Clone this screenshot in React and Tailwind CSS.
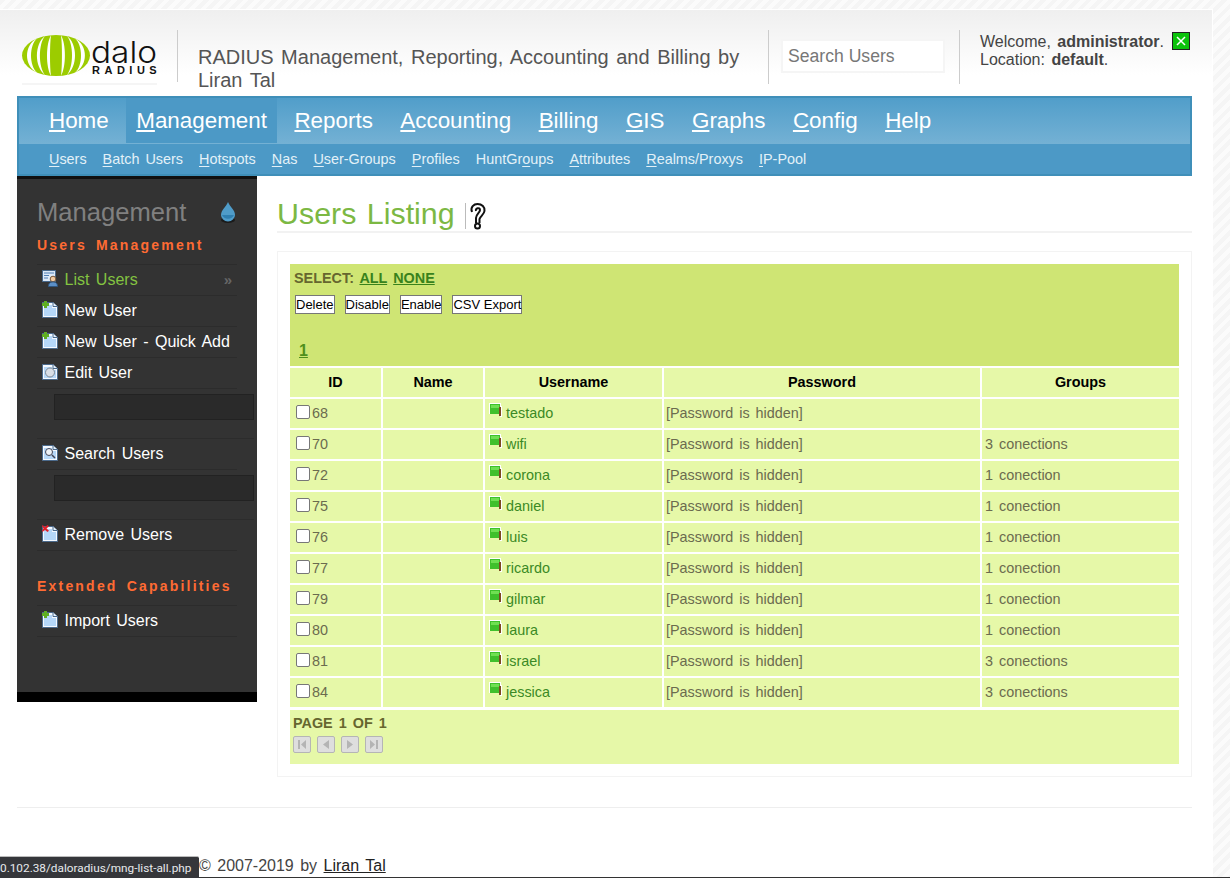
const mainNav = [
  ['H', 'ome'],
  ['M', 'anagement'],
  ['R', 'eports'],
  ['A', 'ccounting'],
  ['B', 'illing'],
  ['G', 'IS'],
  ['G', 'raphs'],
  ['C', 'onfig'],
  ['H', 'elp'],
];

const subNav = [
  ['U', 'sers'],
  ['B', 'atch Users'],
  ['H', 'otspots'],
  ['N', 'as'],
  ['U', 'ser-Groups'],
  ['P', 'rofiles'],
  ['', 'HuntGroups'],
  ['A', 'ttributes'],
  ['R', 'ealms/Proxys'],
  ['I', 'P-Pool'],
];

const users = [
  [68, 'testado', ''],
  [70, 'wifi', '3 conections'],
  [72, 'corona', '1 conection'],
  [75, 'daniel', '1 conection'],
  [76, 'luis', '1 conection'],
  [77, 'ricardo', '1 conection'],
  [79, 'gilmar', '1 conection'],
  [80, 'laura', '1 conection'],
  [81, 'israel', '3 conections'],
  [84, 'jessica', '3 conections'],
];

const Logo = () => (
  <div className="w-[135px] h-[50px] border-b-2 border-[#f5f5f5]">
    <svg width="139" height="42" viewBox="0 0 139 42">
      <ellipse cx="34" cy="20.500" rx="34" ry="20.500" fill="#9ccc00" />
      <g fill="#fff">
        <path d="M29 .2C23.700 9 23.700 32 29 40.800 27.700 32 27.700 9 29 .2z" />
        <path d="M23 1.100C12.300 9 12.300 32 23 39.900 16.300 32 16.300 9 23 1.100z" />
        <path d="M15 3.500C1.700 10 1.700 31 15 37.500 7 31 7 10 15 3.500z" />
        <path d="M39 .2C44.300 9 44.300 32 39 40.800 40.300 32 40.300 9 39 .2z" />
        <path d="M45 1.100C55.700 9 55.700 32 45 39.900 51.700 32 51.700 9 45 1.100z" />
        <path d="M53 3.500C66.300 10 66.300 31 53 37.500 61 31 61 10 53 3.500z" />
      </g>
      <text x="69" y="28" fontFamily="Inter, 'Liberation Sans', sans-serif" fontSize="30" fontWeight="300" textLength="66" lengthAdjust="spacingAndGlyphs" fill="#111">dalo</text>
      <text x="70" y="38.500" fontFamily="'Liberation Sans', sans-serif" fontSize="11" fontWeight="700" letterSpacing="4.500" fill="#111">RADIUS</text>
    </svg>
  </div>
);

const PageIcon = ({ badge }) => (
  <svg width="16" height="17" viewBox="0 0 16 17" className="shrink-0">
    <path d="M.5 1.500h10.500l4.500 4v11H.5z" fill="#f4f9ff" stroke="#4b6a8c" />
    <path d="M11 1.500v4h4.500" fill="#e6f1fb" stroke="#4b6a8c" />
    <path d="M2 4h8v3h4v8H2z" fill="#b5d7f8" />
    {badge === 'add' && <path d="M2 0h3v2h2v3H5v2H2V5H0V2h2z" fill="#5fae23" />}
    {badge === 'remove' && <path d="M.5 0L3 2 5.500 0 7 1.200 4.500 3.500 7 5.800 5.500 7 3 5 .5 7 0 5.800 1.500 3.500 0 1.200z" fill="#e0202a" />}
    {badge === 'edit' && <circle cx="8" cy="9.500" r="4.500" fill="#d8dee6" stroke="#7b8794" />}
    {badge === 'search' && <><circle cx="7" cy="8" r="3.500" fill="#eef3f8" stroke="#445" /><path d="M10 11l3 3" stroke="#445" strokeWidth="1.500" /></>}
  </svg>
);

const ListIcon = () => (
  <svg width="17" height="17" viewBox="0 0 17 17" className="shrink-0">
    <path d="M.5.5h13v11H.5z" fill="#dce9f8" stroke="#47688c" />
    <path d="M2 3h10M2 5.500h5M2 8h4" stroke="#4f7fb5" />
    <circle cx="11" cy="9" r="2.800" fill="#f1c9a0" stroke="#7a5a3c" />
    <path d="M6.500 16.500c0-3.500 2-4.500 4.500-4.500s4.500 1 4.500 4.500z" fill="#5b8fc7" stroke="#2f5680" />
  </svg>
);

const Flag = () => (
  <svg width="13" height="14" viewBox="0 0 13 14" className="shrink-0">
    <path d="M0 0h12v3h1v11h-2v-3H0z" fill="#fff" />
    <path d="M1 1h10v10H1z" fill="#3fc02c" />
    <path d="M2 2h8v3H2z" fill="#6fe052" />
    <path d="M10 4h2v9h-2z" fill="#7a4a20" />
  </svg>
);

const SideItem = ({ icon, active, children }) => (
  <div className="flex items-center h-[31px] pl-[5px] pr-[5px] border-b border-[#2c2c2c]">
    <span className="w-[22.500px] -mt-1">{icon}</span>
    <span className={active ? 'text-[#83c341]' : 'text-white'}>{children}</span>
    {active && <span className="ml-auto text-[#666] text-[15px] font-bold">»</span>}
  </div>
);

const SideInput = () => (
  <div className="h-[50px] pt-[5px] -mr-[17px] pl-[17px] border-b border-[#2c2c2c]">
    <div className="h-[26px] bg-[#2a2a2a] border border-[#222]" />
  </div>
);

const Pager = ({ d }) => (
  <span className="w-[18px] h-[17px] rounded-[2px] border border-[#b5b5b5] bg-[#dedede] flex items-center justify-center">
    <svg width="8" height="9" viewBox="0 0 8 9"><path d={d} fill="#b4b4b4" /></svg>
  </span>
);

const ActionBtn = ({ children }) => (
  <span className="h-[19px] bg-white border border-[#777] text-black text-[13px] leading-[17px]">{children}</span>
);

const App = () => {
  return (
    <div className="relative h-[878px] overflow-hidden bg-[repeating-linear-gradient(135deg,#f5f5f5_0,#f5f5f5_4px,#fbfbfb_4px,#fbfbfb_8px)] pt-[9px] pr-[17px] font-['Liberation_Sans',Arial,sans-serif] text-[#444] [word-spacing:2px]">
      <div className="h-[869px] border-t border-r border-white bg-[linear-gradient(#efefef_0,#ffffff_65px)] bg-no-repeat pl-[17px] pr-[20px] pt-[19px] flex flex-col">
        <header className="h-[67px] shrink-0 flex">
          <div className="pl-[5px] pt-[6px] w-[160px]"><Logo /></div>
          <div className="w-px h-[52px] mt-px bg-[#ccc]" />
          <div className="w-[590px] pl-[20px] pr-[20px] pt-[17px] text-[20px] leading-[23px] text-[#555]">
            RADIUS Management, Reporting, Accounting and Billing by Liran Tal
          </div>
          <div className="w-px h-[54px] mt-px bg-[#ccc]" />
          <div className="pl-[12px] pt-[10px] w-[190px]">
            <div className="w-[164px] h-[34px] bg-white border-2 border-[#f5f5f5] pl-[5px] text-[17.600px] leading-[31px] text-[#777] [word-spacing:0]">Search Users</div>
          </div>
          <div className="w-px h-[54px] mt-px bg-[#ccc]" />
          <div className="pl-[20px] pt-[4px] text-[16px] leading-[18px] whitespace-nowrap">
            <div className="flex items-start">
              <span>Welcome, <b>administrator</b>.</span>
              <span className="ml-[8px] -mt-px w-[18px] h-[18px] bg-[#0bc30b] border border-[#222] flex items-center justify-center">
                <svg width="10" height="10" viewBox="0 0 10 10"><path d="M1 1l8 8M9 1l-8 8" stroke="#fff" strokeWidth="1.500" /></svg>
              </span>
            </div>
            <div>Location: <b>default</b>.</div>
          </div>
        </header>

        <nav className="shrink-0 h-[80px] border-2 border-[#3f8fb9] text-white">
          <div className="h-[46px] flex pl-[19.500px] gap-[6.500px] bg-[linear-gradient(#519eca,#74b1d4)] text-[22.400px] leading-[45px] [word-spacing:0]">
            {mainNav.map(([key, rest], i) => (
              <a key={i} className={`px-[10.500px] h-[45px] ${i === 1 ? 'bg-[#4c99c6]' : ''}`}>
                <span className="underline underline-offset-2">{key}</span>{rest}
              </a>
            ))}
          </div>
          <div className="h-[30px] flex pl-[30px] gap-[16px] bg-[#4c99c6] text-[14.400px] leading-[30px] text-[#e3f1f8]">
            {subNav.map(([key, rest], i) => (
              <a key={i}>
                <span className="underline underline-offset-2">{key}</span>
                {i === 6 ? <>Hunt<span>Gr</span><span className="underline underline-offset-2">o</span>ups</> : rest}
              </a>
            ))}
          </div>
        </nav>

        <div className="flex flex-1 min-h-0">
          <aside className="w-[240px] h-[526px] shrink-0 bg-[#333] border-t-[3px] border-[#111] border-b-[10px] border-b-black pl-[20px] pr-[20px] text-[16px]">
            <div className="flex items-center justify-between pt-[17px] h-[49px] text-[25.600px] text-[#808080] [word-spacing:0] pr-[1px]">
              <span>Management</span>
              <svg width="16" height="21" viewBox="0 0 16 21">
                <ellipse cx="8" cy="18" rx="7" ry="3" fill="#1a1a1a" />
                <path d="M8 0c2 5 7 8 7 13a7 6.500 0 0 1-14 0C1 8 6 5 8 0z" fill="#4f9cc9" />
                <path d="M2 13h12a6.500 6 0 0 1-12 0z" fill="#2f7fb0" />
              </svg>
            </div>
            <h3 className="h-[37px] pt-[9px] text-[14px] leading-[17px] font-bold tracking-[2.200px] text-[#ff6b33] border-b border-[#2c2c2c] [word-spacing:3px]">Users Management</h3>
            <SideItem active icon={<ListIcon />}>List Users</SideItem>
            <SideItem icon={<PageIcon badge="add" />}>New User</SideItem>
            <SideItem icon={<PageIcon badge="add" />}>New User - Quick Add</SideItem>
            <SideItem icon={<PageIcon badge="edit" />}>Edit User</SideItem>
            <SideInput />
            <SideItem icon={<PageIcon badge="search" />}>Search Users</SideItem>
            <SideInput />
            <SideItem icon={<PageIcon badge="remove" />}>Remove Users</SideItem>
            <h3 className="h-[55px] pt-[27px] text-[14px] leading-[17px] font-bold tracking-[2.200px] text-[#ff6b33] border-b border-[#2c2c2c] [word-spacing:3px]">Extended Capabilities</h3>
            <SideItem icon={<PageIcon badge="add" />}>Import Users</SideItem>
          </aside>

          <main className="flex-1 pl-[20px]">
            <div className="h-[57px] pt-[17px] border-b-2 border-[#f2f2f2] flex items-start">
              <h2 className="text-[30.400px] leading-[40px] text-[#7cb843]">Users Listing</h2>
              <span className="ml-[10px] mt-[10px] w-px h-[26px] bg-[#bbb]" />
              <svg className="ml-[3px] mt-[10px]" width="17" height="27" viewBox="0 0 17 27" fill="none" stroke="#111" strokeWidth="2">
                <path d="M3 9C1 4 5 1 8.500 1 13 1 16 4 15.500 8c-.5 3.500-4 5-5 8v4" />
                <path d="M7 8c-1-3 4-4 4-1 0 2.500-4 4-4 8v5" />
                <circle cx="8.500" cy="23" r="2.500" />
              </svg>
            </div>

            <div className="mt-[18px] h-[526px] border border-[#f3f3f3] px-[12px] pt-[12px]">
              <table className="w-[889px] table-fixed border-separate border-spacing-0 text-[14.400px] text-[#6b6b4f]">
                <colgroup>
                  <col className="w-[93px]" />
                  <col className="w-[102px]" />
                  <col className="w-[179px]" />
                  <col className="w-[318px]" />
                  <col className="w-[197px]" />
                </colgroup>
                <thead>
                  <tr>
                    <td colSpan={5} className="h-[104px] border-b-2 border-white p-0 align-top">
                      <div className="h-[102px] bg-[#cfe574] pl-[4px] pt-[6px] text-[#66662f]">
                        <div className="h-[17px] leading-[17px] font-bold text-[14.400px]">
                          SELECT: <a className="underline text-[#38821c]">ALL</a> <a className="underline text-[#38821c]">NONE</a>
                        </div>
                        <div className="flex gap-[10px] pl-[1px] mt-[8px] [word-spacing:0]">
                          <ActionBtn>Delete</ActionBtn>
                          <ActionBtn>Disable</ActionBtn>
                          <ActionBtn>Enable</ActionBtn>
                          <ActionBtn>CSV Export</ActionBtn>
                        </div>
                        <a className="block mt-[27px] ml-[5px] underline font-bold text-[16px] leading-[20px] text-[#4f8f1c]">1</a>
                      </div>
                    </td>
                  </tr>
                  <tr className="h-[31px] text-center font-bold text-black text-[14.400px]">
                    {['ID', 'Name', 'Username', 'Password', 'Groups'].map((h, i) => (
                      <th key={h} className={`p-0 bg-[#e6f8a8] border-b-2 border-white ${i < 4 ? 'border-r-2' : ''}`}>{h}</th>
                    ))}
                  </tr>
                </thead>
                <tbody>
                  {users.map(([id, name, groups]) => (
                    <tr key={id} className="h-[31px]">
                      <td className="p-0 bg-[#e6f8a8] border-b-2 border-r-2 border-white">
                        <div className="flex items-center pl-[6px]">
                          <span className="w-[14px] h-[14px] mr-[2px] -mt-[3px] rounded-[2px] bg-white border border-[#777]" />
                          {id}
                        </div>
                      </td>
                      <td className="p-0 bg-[#e6f8a8] border-b-2 border-r-2 border-white" />
                      <td className="p-0 bg-[#e6f8a8] border-b-2 border-r-2 border-white">
                        <div className="flex items-center pl-[4px] gap-[4px] text-[#3b8a25]">
                          <span className="-mt-[6px]"><Flag /></span>
                          {name}
                        </div>
                      </td>
                      <td className="p-0 pl-[2px] bg-[#e6f8a8] border-b-2 border-r-2 border-white">[Password is hidden]</td>
                      <td className="p-0 pl-[3px] bg-[#e6f8a8] border-b-2 border-white">{groups}</td>
                    </tr>
                  ))}
                </tbody>
              </table>
              <div className="h-[54px] w-[889px] mt-[1px] bg-[#e6f8a8] pl-[3px] pt-[5px]">
                <div className="font-bold text-[14.400px] leading-[17px] text-[#66662f]">PAGE 1 OF 1</div>
                <div className="flex gap-[6px] mt-[4px]">
                  <Pager d="M0 0h2v9H0zM8 0v9L3 4.500z" />
                  <Pager d="M7 0v9L1 4.500z" />
                  <Pager d="M1 0v9l6-4.500z" />
                  <Pager d="M6 0h2v9H6zM0 0v9l5-4.500z" />
                </div>
              </div>
            </div>
          </main>
        </div>

        <div className="absolute left-[17px] top-[807px] w-[1175px] h-px bg-[#eeeeee]" />
        <div className="absolute left-[199px] top-[857px] text-[16px] leading-[18px]">
          © 2007-2019 by <a className="underline text-[#222]">Liran Tal</a>
        </div>
      </div>

      <div className="absolute left-0 right-0 bottom-0 h-px bg-[#333]" />
      <div className="absolute left-0 bottom-0 w-[199px] h-[22px] bg-[#35363a] border-t border-[#bbb] rounded-tr-[2px] text-[#e8eaed] text-[11.800px] leading-[22px] font-['Roboto',sans-serif] overflow-hidden whitespace-nowrap [word-spacing:0]">
        0.102.38/daloradius/mng-list-all.php
      </div>
    </div>
  );
};

export default App;
